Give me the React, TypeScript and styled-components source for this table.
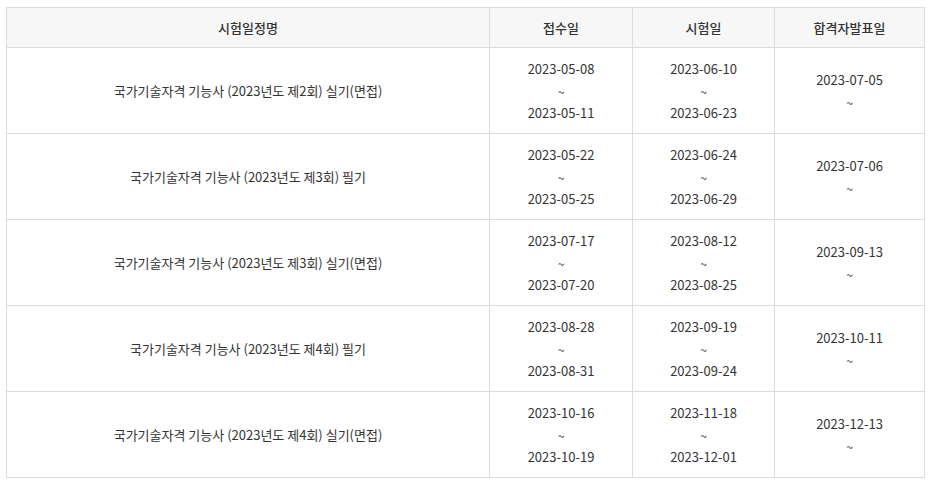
import React from "react";
import styled, { createGlobalStyle } from "styled-components";

const Global = createGlobalStyle`
  html, body { margin: 0; padding: 0; background: #fff; }
  body { font-family: "Noto Sans CJK KR", "Noto Sans", sans-serif; }
`;

const Page = styled.div`
  padding: 7px 0 0 6px;
`;

const Table = styled.table`
  border-collapse: collapse;
  width: 918px;
  table-layout: fixed;
  font-size: 13px;
  color: #333;
`;

const Col = styled.col<{ $w: number }>`
  width: ${(p) => p.$w}px;
`;

const Th = styled.th`
  height: 39px;
  padding: 0;
  background: #f7f7f7;
  border: 1px solid #dcdcdc;
  font-weight: 500;
  text-align: center;
  vertical-align: middle;
  line-height: 20px;
`;

const Td = styled.td`
  height: 85px;
  padding: 0;
  border: 1px solid #dcdcdc;
  text-align: center;
  vertical-align: middle;
  line-height: 22px;
`;

const Lines = styled.div`
  display: flex;
  flex-direction: column;
  align-items: center;
`;

const Tilde = styled.span`
  font-size: 12px;
  position: relative;
  top: 1px;
`;

type Row = { name: string; rec: [string, string]; exam: [string, string]; pass: string };

const rows: Row[] = [
  { name: "국가기술자격 기능사 (2023년도 제2회) 실기(면접)", rec: ["2023-05-08", "2023-05-11"], exam: ["2023-06-10", "2023-06-23"], pass: "2023-07-05" },
  { name: "국가기술자격 기능사 (2023년도 제3회) 필기", rec: ["2023-05-22", "2023-05-25"], exam: ["2023-06-24", "2023-06-29"], pass: "2023-07-06" },
  { name: "국가기술자격 기능사 (2023년도 제3회) 실기(면접)", rec: ["2023-07-17", "2023-07-20"], exam: ["2023-08-12", "2023-08-25"], pass: "2023-09-13" },
  { name: "국가기술자격 기능사 (2023년도 제4회) 필기", rec: ["2023-08-28", "2023-08-31"], exam: ["2023-09-19", "2023-09-24"], pass: "2023-10-11" },
  { name: "국가기술자격 기능사 (2023년도 제4회) 실기(면접)", rec: ["2023-10-16", "2023-10-19"], exam: ["2023-11-18", "2023-12-01"], pass: "2023-12-13" },
];

const Range = ({ a, b }: { a: string; b?: string }) => (
  <Lines>
    <span>{a}</span>
    <Tilde>~</Tilde>
    {b !== undefined && <span>{b}</span>}
  </Lines>
);

export default function App() {
  return (
    <>
      <Global />
      <Page>
        <Table>
          <colgroup>
            <Col $w={483} />
            <Col $w={143} />
            <Col $w={142} />
            <Col $w={150} />
          </colgroup>
          <thead>
            <tr>
              <Th>시험일정명</Th>
              <Th>접수일</Th>
              <Th>시험일</Th>
              <Th>합격자발표일</Th>
            </tr>
          </thead>
          <tbody>
            {rows.map((r) => (
              <tr key={r.name + r.pass}>
                <Td>{r.name}</Td>
                <Td><Range a={r.rec[0]} b={r.rec[1]} /></Td>
                <Td><Range a={r.exam[0]} b={r.exam[1]} /></Td>
                <Td><Range a={r.pass} /></Td>
              </tr>
            ))}
          </tbody>
        </Table>
      </Page>
    </>
  );
}
